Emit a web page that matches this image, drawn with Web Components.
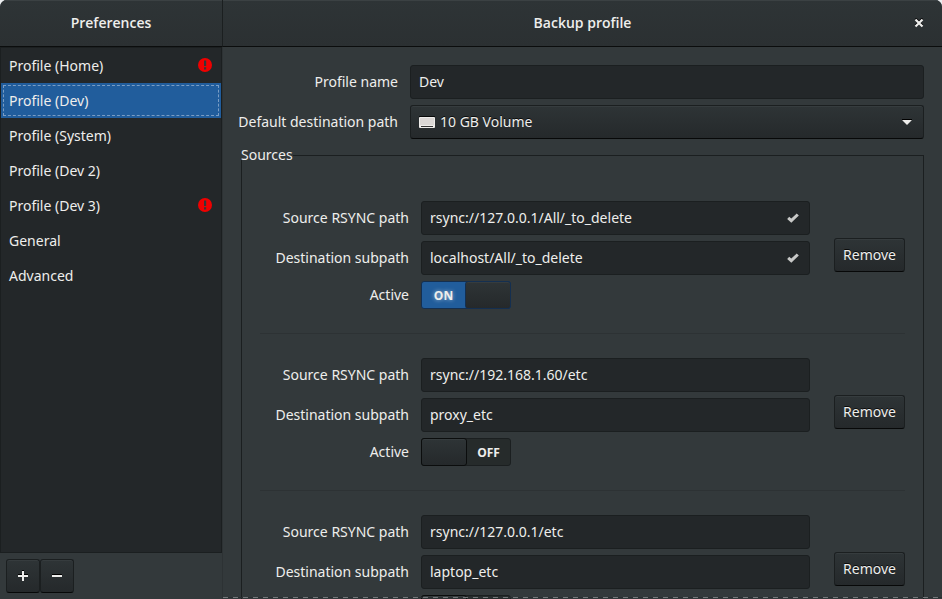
<!DOCTYPE html>
<html lang="en">
<head>
<meta charset="utf-8">
<title>Preferences</title>
<style>
html, body { height: 100%; margin: 0; }
body { background: #eceef0; font: 14px/20px "Noto Sans", "Open Sans", sans-serif; color: #eeeeec; overflow: hidden; }
</style>
</head>
<body>
<preferences-window></preferences-window>
<script>
const CONTROL = `
  *, *::before, *::after { box-sizing: border-box; }
  button, input, select { font: inherit; color: inherit; margin: 0; }
  .raised {
    border: 1px solid #1b1f20; border-bottom-color: #070808; border-radius: 3px;
    background: linear-gradient(#2e3436, #25292b); box-shadow: inset 0 1px #363c3e;
    text-shadow: 0 -1px #000c;
  }`;

const define = (name, markup, setup) => customElements.define(name, class extends HTMLElement {
  connectedCallback() {
    if (this.shadowRoot) return;
    const root = this.attachShadow({ mode: "open" });
    root.innerHTML = typeof markup === "function" ? markup(this) : markup;
    if (setup) setup(this, root);
  }
});

define("title-bar", el => `<style>
  :host { display: grid; grid-template-columns: 1fr auto 1fr; align-items: center; height: 47px; box-sizing: border-box;
    background: linear-gradient(#2e3436, #2b3032); border-bottom: 1px solid #0b0d0d; box-shadow: inset 0 1px #3b4143; }
  h1 { margin: 0; grid-column: 2; font: 600 14px/20px "Open Sans", "Noto Sans", sans-serif; }
  ::slotted(*) { justify-self: end; }
</style><h1>${el.getAttribute("heading")}</h1><slot></slot>`);

define("close-button", `<style>${CONTROL}
  :host { display: block; padding-right: 18px; }
  button { display: block; padding: 0; border: 0; background: none; }
  svg { display: block; }
</style><button aria-label="Close"><svg width="10" height="10" viewBox="0 0 10 10"><path d="M1.5 0.5 8.500 7.500M8.500 .5 1.500 7.500" stroke="#000" stroke-width="2.200"/><path d="M1.500 1.500 8.500 8.500M8.500 1.500 1.500 8.500" stroke="#eeeeec" stroke-width="2.200"/></svg></button>`);

define("profile-item", el => `<style>${CONTROL}
  :host { display: block; }
  button { display: flex; align-items: center; justify-content: space-between; width: 100%; height: 35px; padding: 0 9px 0 8px;
    border: 0; background: none; text-align: left; }
  :host([selected]) button { background: #215d9c; outline: 1px dashed #7a9dc4; outline-offset: -3px; border-radius: 0; }
  svg { display: block; margin-bottom: 1px; }
</style><button ${el.hasAttribute("selected") ? 'aria-current="true"' : ""}><span><slot></slot></span>${el.hasAttribute("alert") ? `<svg width="14" height="14" viewBox="0 0 14 14" role="img" aria-label="Error"><circle cx="7" cy="7" r="7" fill="#ef0000"/><path d="M6 2.500h2.200v5.500H6zM6 9.300h2.200v2.200H6z" fill="#33393b"/></svg>` : ""}</button>`);

define("side-bar", `<style>${CONTROL}
  :host { display: flex; flex-direction: column; min-height: 0; }
  nav { flex: 1; background: #232729; border: 1px solid #1b1f20; }
  .tools { display: flex; padding: 6px; }
  button { display: grid; place-items: center; width: 34px; height: 34px; padding: 0; }
</style>
<nav aria-label="Preferences"><slot></slot></nav>
<div class="tools">
  <button class="raised" aria-label="Add profile"><svg width="12" height="12" viewBox="0 0 12 12"><path d="M1 4h10v1H1zM5 0h2v1H5z" fill="#000"/><path d="M5 1h2v4h4v2H7v4H5V7H1V5h4z" fill="#eeeeec"/></svg></button>
  <button class="raised" aria-label="Remove profile"><svg width="12" height="12" viewBox="0 0 12 12"><path d="M1 4h10v1H1z" fill="#000"/><path d="M1 5h10v2H1z" fill="#eeeeec"/></svg></button>
</div>`);

const CHECK = `<svg class="check" width="12" height="10" viewBox="0 0 12 10" aria-hidden="true"><path d="M1.200 4.800 4.300 7.700 10.800 1.500" fill="none" stroke="#c8c9c8" stroke-width="3"/></svg>`;
const DISK = `<svg class="disk" width="16" height="14" viewBox="0 0 16 14" aria-hidden="true"><path d="M0 1h16v1H0z" fill="#080909"/><path d="M0 3a1 1 0 0 1 1-1h14a1 1 0 0 1 1 1v9a1 1 0 0 1-1 1H1a1 1 0 0 1-1-1z" fill="#eeecea"/><path d="M1 3h14v7H1z" fill="#dbd7d5"/><path d="M2 11h12v1H2z" fill="#343434"/></svg>`;
const ARROW = `<svg class="arrow" width="10" height="6" viewBox="0 0 10 6" aria-hidden="true"><path d="M0 0h10v1.500H0z" fill="#000"/><path d="M0 1h10L5 6z" fill="#eeeeec"/></svg>`;

define("form-field", el => {
  const kind = el.getAttribute("kind") || "text";
  const value = el.getAttribute("value") || "";
  const control = {
    text: `<div class="box"><input id="control" class="entry" type="text" value="${value}">${el.hasAttribute("valid") ? CHECK : ""}</div>`,
    choice: `<div class="box">${DISK}<select id="control" class="raised"><option>${value}</option></select>${ARROW}</div>`,
    toggle: `<div class="toggle"><input id="control" class="switch" type="checkbox" role="switch" ${el.hasAttribute("on") ? "checked" : ""}><span class="state">${el.hasAttribute("on") ? "ON" : "OFF"}</span><span class="knob raised"></span></div>`
  }[kind];
  return `<style>${CONTROL}
  :host { display: grid; grid-template-columns: var(--label-width) minmax(0, 1fr); column-gap: 12px; align-items: center; }
  label { justify-self: end; white-space: nowrap; }
  .box { position: relative; }
  .entry, select { display: block; width: 100%; height: 34px; }
  .entry { padding: 0 8px 2px; border: 1px solid #1b1f20; border-radius: 3px; background: #232729; outline: 0; }
  select { appearance: none; padding: 0 30px 0 29px; }
  .check, .disk, .arrow { position: absolute; inset-block: 0; margin-block: auto; pointer-events: none; }
  .check { right: 11px; }
  .disk { left: 9px; }
  .arrow { right: 12px; }
  .toggle { display: grid; grid-template-columns: 1fr 1fr; width: 90px; height: 28px; }
  .switch { grid-area: 1 / 1 / 2 / 3; appearance: none; width: 100%; height: 100%; border: 1px solid #1b1f20; border-radius: 3px; background: #262b2b; }
  .switch:checked { background: #215d9c; border-color: #142f50; }
  .state, .knob { pointer-events: none; grid-row: 1; }
  .state { grid-column: 2; place-self: center; padding-top: 2px; font: bold 12px/16px "Open Sans", "Noto Sans", sans-serif; }
  .knob { grid-column: 1; border-color: #0b0d0d; margin-right: -1px; }
  .switch:checked ~ .state { grid-column: 1; text-shadow: 0 0 4px #fff9; }
  .switch:checked ~ .knob { grid-column: 2; border-color: #142f50; margin: 0 0 0 -1px; }
</style><label for="control">${el.getAttribute("label")}</label>${control}`;
}, (el, root) => {
  const toggle = root.querySelector(".switch");
  if (toggle) toggle.addEventListener("change", () => { root.querySelector(".state").textContent = toggle.checked ? "ON" : "OFF"; });
});

define("backup-source", el => {
  const valid = el.hasAttribute("valid") ? "valid" : "";
  return `<style>${CONTROL}
  :host { display: flex; align-items: center; gap: 24px; padding-bottom: 24px; margin-bottom: 24px; border-bottom: 1px solid #2d3234; --label-width: 149px; }
  .fields { flex: 1; display: grid; gap: 6px; min-width: 0; }
  button { height: 34px; padding: 0 8px; min-width: 71px; }
</style>
<div class="fields">
  <form-field label="Source RSYNC path" value="${el.getAttribute("source")}" ${valid}></form-field>
  <form-field label="Destination subpath" value="${el.getAttribute("destination")}" ${valid}></form-field>
  <form-field label="Active" kind="toggle" ${el.hasAttribute("active") ? "on" : ""}></form-field>
</div>
<button class="raised">Remove</button>`;
});

define("source-group", `<style>
  :host { display: block; padding-top: 5px; }
  fieldset { margin: 0; padding: 41px 18px 0; border: 1px solid #1b1f20; min-width: 0; }
  legend { margin-left: -19px; padding: 0; line-height: 10px; }
</style><fieldset><legend>Sources</legend><slot></slot></fieldset>`);

define("profile-editor", `<style>
  :host { display: block; position: relative; min-height: 0; border-left: 1px solid #2d3234; --label-width: 157px; }
  .scroller { height: 100%; overflow: hidden auto; scrollbar-width: none; }
  .page { display: grid; gap: 6px; padding: 18px; }
  .more { position: absolute; inset: auto 0 1px 0; height: 1px; pointer-events: none;
    background: repeating-linear-gradient(90deg, #73787a 0 5px, #2a2f31 5px 10px); }
</style><div class="scroller"><div class="page"><slot></slot></div></div><div class="more"></div>`);

define("preferences-window", `<style>
  :host { display: grid; grid-template: auto minmax(0, 1fr) / 222px minmax(0, 1fr); height: 100vh; background: #33393b;
    border-radius: 7px 7px 0 0; overflow: hidden; }
  .detail { border-left: 1px solid #1b1f20; }
</style>
<title-bar heading="Preferences"></title-bar>
<title-bar class="detail" heading="Backup profile"><close-button></close-button></title-bar>
<side-bar>
  <profile-item alert>Profile (Home)</profile-item>
  <profile-item selected>Profile (Dev)</profile-item>
  <profile-item>Profile (System)</profile-item>
  <profile-item>Profile (Dev 2)</profile-item>
  <profile-item alert>Profile (Dev 3)</profile-item>
  <profile-item>General</profile-item>
  <profile-item>Advanced</profile-item>
</side-bar>
<profile-editor>
  <form-field label="Profile name" value="Dev"></form-field>
  <form-field label="Default destination path" kind="choice" value="10 GB Volume"></form-field>
  <source-group>
    <backup-source source="rsync://127.0.0.1/All/_to_delete" destination="localhost/All/_to_delete" valid active></backup-source>
    <backup-source source="rsync://192.168.1.60/etc" destination="proxy_etc"></backup-source>
    <backup-source source="rsync://127.0.0.1/etc" destination="laptop_etc"></backup-source>
  </source-group>
</profile-editor>`);
</script>
</body>
</html>
